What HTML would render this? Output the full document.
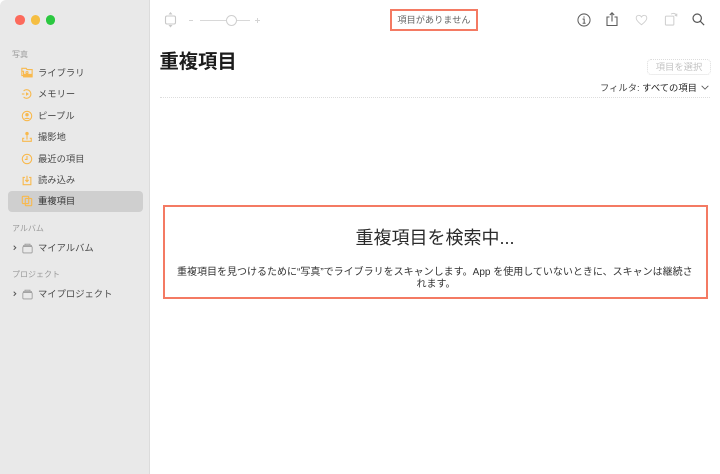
<!DOCTYPE html>
<html lang="ja"><head><meta charset="utf-8"><style>
html,body{margin:0;padding:0;background:#fff}
body{width:720px;height:474px;position:relative;overflow:hidden;font-family:"Liberation Sans","Noto Sans CJK JP",sans-serif;color:#333}
div,span{position:absolute;white-space:nowrap}
svg{position:absolute;overflow:visible}
.side{left:0;top:0;width:149px;height:474px;background:#e9e9e9;border-right:1px solid #dcdcdc;border-top-left-radius:6px}
.dot{width:9.4px;height:9.4px;border-radius:50%;top:15.3px}
.h{font-size:8px;color:#9a9a9a;line-height:10px;left:12px}
.i{font-size:9.3px;color:#4a4a4a;line-height:12px;left:38px}
.ic{left:21px;width:12px;height:12px;fill:none;stroke:#f8b94e;stroke-width:1.3}
.fo{left:22px;width:11px;height:10.5px;fill:none;stroke:#999;stroke-width:1}
.ch{left:13px;width:3.5px;height:5.5px;fill:none;stroke:#555;stroke-width:1.5}
.g{fill:none;stroke:#5e5e5e;stroke-width:1.1}
.l{fill:none;stroke:#cfcfcf;stroke-width:1.1}
</style></head><body>
<div class="side"></div>
<div class="dot" style="left:15.3px;background:#fc6a5c"></div>
<div class="dot" style="left:30.5px;background:#f5be42"></div>
<div class="dot" style="left:46px;background:#2bc840"></div>

<div class="h" style="top:50px">写真</div>
<svg class="ic" style="top:67px" viewBox="0 0 14 14"><path d="M1 3.5V1.5H6L7 3H13V11.5H3V5H1.5"/><path d="M1 3.5V10H3"/><rect x="3" y="8" width="10" height="4" fill="#f8b94e" stroke="none"/><circle cx="7" cy="6.5" r="1.2"/></svg>
<div class="i" style="top:67px">ライブラリ</div>
<svg class="ic" style="top:88px" viewBox="0 0 14 14"><path d="M3 3.5A5 5 0 1 1 3 10.5"/><path d="M1 7H4"/><path d="M5.8 4.8V9.2L9.3 7Z" fill="#f8b94e" stroke="none"/></svg>
<div class="i" style="top:88px">メモリー</div>
<svg class="ic" style="top:110px" viewBox="0 0 14 14"><circle cx="7" cy="7" r="5.5"/><circle cx="7" cy="5.5" r="2" fill="#f8b94e" stroke="none"/><path d="M3.5 10.5C4.5 8.5 9.5 8.5 10.5 10.5" fill="#f8b94e" stroke="none"/></svg>
<div class="i" style="top:110px">ピープル</div>
<svg class="ic" style="top:131px" viewBox="0 0 14 14"><circle cx="7" cy="3" r="2" fill="#f8b94e" stroke="none"/><path d="M7 5V10"/><path d="M3.8 8.5H2V12H12V8.5H10.2"/></svg>
<div class="i" style="top:131px">撮影地</div>
<svg class="ic" style="top:153px" viewBox="0 0 14 14"><circle cx="7" cy="7" r="5.5"/><path d="M7 3.5V7.5H4.5"/></svg>
<div class="i" style="top:153px">最近の項目</div>
<svg class="ic" style="top:174px" viewBox="0 0 14 14"><path d="M4.5 4H2.5V12.5H11.5V4H9.5"/><path d="M7 2V8.5M5 6.8L7 9L9 6.8"/></svg>
<div class="i" style="top:174px">読み込み</div>

<div style="left:8px;top:191px;width:134.5px;height:21px;border-radius:4px;background:#cfcfcf"></div>
<svg class="ic" style="top:195px" viewBox="0 0 14 14"><rect x="1.5" y="1.5" width="7.5" height="8.5" rx="1"/><rect x="5" y="4" width="7.5" height="8.5" rx="1"/></svg>
<div class="i" style="top:195px;color:#333">重複項目</div>

<div class="h" style="top:224px">アルバム</div>
<svg class="ch" style="top:245px" viewBox="0 0 5 8"><path d="M1 1L4 4L1 7"/></svg>
<svg class="fo" style="top:243px" viewBox="0 0 13 12"><rect x="1" y="4" width="11" height="7.5" rx="1"/><path d="M2 4V2.6H11V4M3.5 2.6V1.2H9.5V2.6"/></svg>
<div class="i" style="top:241.5px">マイアルバム</div>
<div class="h" style="top:270px">プロジェクト</div>
<svg class="ch" style="top:291px" viewBox="0 0 5 8"><path d="M1 1L4 4L1 7"/></svg>
<svg class="fo" style="top:289px" viewBox="0 0 13 12"><rect x="1" y="4" width="11" height="7.5" rx="1"/><path d="M2 4V2.6H11V4M3.5 2.6V1.2H9.5V2.6"/></svg>
<div class="i" style="top:287.5px">マイプロジェクト</div>

<svg style="left:164px;top:11px" width="14" height="18" viewBox="0 0 14 18"><rect x="1.5" y="5" width="10" height="8" rx="1.5" fill="none" stroke="#c8c8c8" stroke-width="1.1"/><path d="M6.5 1L8.5 3.5H4.5ZM6.5 16.5L8.5 14H4.5Z" fill="#c8c8c8"/></svg>
<div style="left:189px;top:20px;width:4px;height:1px;background:#d4d4d4"></div>
<div style="left:200px;top:20px;width:50px;height:1px;background:#d8d8d8"></div>
<div style="left:226px;top:15px;width:9px;height:9px;border:1px solid #cfcfcf;border-radius:50%;background:#fff"></div>
<div style="left:255px;top:20px;width:5px;height:1px;background:#d4d4d4"></div>
<div style="left:257px;top:18px;width:1px;height:5px;background:#d4d4d4"></div>

<div style="left:390px;top:9px;width:84px;height:18px;border:2px solid #f47a63;background:#fff;font-size:9.2px;line-height:18px;text-align:center;color:#666">項目がありません</div>

<svg class="g" style="left:577px;top:13px" width="14" height="14" viewBox="0 0 15 15"><circle cx="7.5" cy="7.5" r="6.5"/><path d="M6 6.5H7.7V11M6 11H9.2M7.5 3.6V5"/></svg>
<svg class="g" style="left:606px;top:12px" width="12" height="14" viewBox="0 0 12 14"><path d="M3.5 5H1V13.5H11V5H8.5M6 9.5V1M3.8 3L6 .8L8.2 3"/></svg>
<svg class="l" style="left:635px;top:14px" width="13" height="12" viewBox="0 0 15 14"><path d="M7.5 12.5C3 9 1.3 7 1.3 4.6C1.3 2.7 2.8 1.5 4.3 1.5C5.6 1.5 6.8 2.2 7.5 3.5C8.2 2.2 9.4 1.5 10.7 1.5C12.2 1.5 13.7 2.7 13.7 4.6C13.7 7 12 9 7.5 12.5Z"/></svg>
<svg class="l" style="left:664px;top:11px" width="15" height="15" viewBox="0 0 16 16"><rect x="1.5" y="5.5" width="9" height="9.5" rx="1"/><path d="M7.5 3.3C10 1.8 12.5 2.5 13.5 5M13.7 2.8L13.6 5.2L11.5 4.5"/></svg>
<svg style="left:692px;top:13px" width="13" height="13" viewBox="0 0 15 15" fill="none" stroke="#555" stroke-width="1.4"><circle cx="6" cy="6" r="4.8"/><path d="M9.5 9.5L14 14"/></svg>

<div style="left:159.5px;top:50px;font-size:19.3px;line-height:26px;font-weight:700;color:#1c1c1c">重複項目</div>
<div style="left:647px;top:59px;width:62px;height:14px;border:1px dotted #dcdcdc;border-radius:4px;font-size:9.3px;line-height:14px;text-align:center;color:#c2c2c2">項目を選択</div>
<div style="left:600px;top:81.5px;font-size:9.3px;line-height:12px;color:#444">フィルタ: <span style="position:static;color:#222">すべての項目</span></div>
<svg style="left:700.5px;top:84.5px" width="8" height="5" viewBox="0 0 9 6" fill="none" stroke="#555" stroke-width="1"><path d="M.5 1L4.5 5L8.5 1"/></svg>
<div style="left:160px;top:97px;width:550px;height:0;border-top:1px dotted #ddd"></div>

<div style="left:162.5px;top:205px;width:541.5px;height:89.5px;border:2px solid #f47a63;background:#fff"></div>
<div style="left:164px;top:226px;width:542px;text-align:center;font-size:18px;line-height:24px;color:#2b2b2b">重複項目を検索中...</div>
<div style="left:177px;top:266px;font-size:10px;line-height:13px;color:#333">重複項目を見つけるために“写真”でライブラリをスキャンします。App を使用していないときに、スキャンは継続さ</div>
<div style="left:165px;top:278px;width:542px;text-align:center;font-size:10px;line-height:13px;color:#333">れます。</div>
</body></html>
